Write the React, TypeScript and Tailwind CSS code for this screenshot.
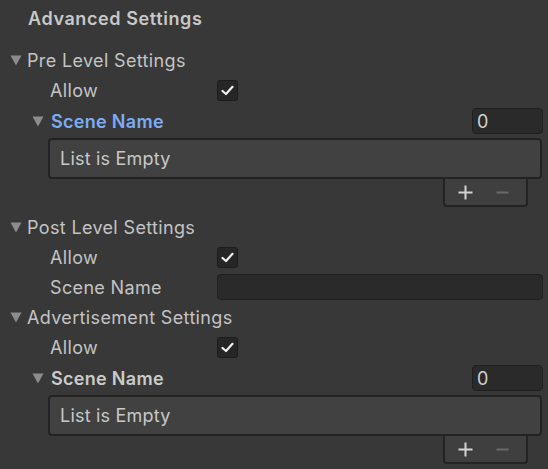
import React from "react"

const font = { fontFamily: "Inter, 'Noto Sans', sans-serif" }

function Arrow({ x }: { x: string }) {
  return (
    <svg className={`${x} shrink-0`} width="12" height="11" viewBox="0 0 12 11">
      <path d="M0.5 0.5 L11.5 0.5 L6 10.5 Z" fill="#8c8c8c" />
    </svg>
  )
}

function Checkbox() {
  return (
    <div className="w-[21px] h-[21px] rounded-[3px] bg-[#262626] border border-[#1c1c1c] flex items-center justify-center">
      <svg width="13" height="11" viewBox="0 0 13 11">
        <path d="M1.5 6 L5 9 L11.5 1.8" stroke="#f0f0f0" strokeWidth="2.2" fill="none" strokeLinecap="round" strokeLinejoin="round" />
      </svg>
    </div>
  )
}

function Foldout({ label }: { label: string }) {
  return (
    <div className="h-[30px] flex items-center">
      <Arrow x="ml-[10px]" />
      <span className="ml-[5px] text-[18px] tracking-[0.35px] text-[#c4c4c4]">{label}</span>
    </div>
  )
}

function CheckRow({ label }: { label: string }) {
  return (
    <div className="h-[30px] flex items-center">
      <span className="pl-[50px] w-[217px] text-[18px] tracking-[0.35px] text-[#c4c4c4]">{label}</span>
      <Checkbox />
    </div>
  )
}

function ListBlock({ blue }: { blue?: boolean }) {
  return (
    <div>
      <div className="mt-[1px] h-[30px] flex items-center">
        <Arrow x="ml-[32px]" />
        <span className={`ml-[7px] text-[18px] tracking-[0.3px] font-semibold ${blue ? "text-[#7cacf5]" : "text-[#cbcbcb]"}`}>Scene Name</span>
        <div className="ml-auto mr-[5px] w-[71px] h-[26px] rounded-[4px] bg-[#2a2a2a] border border-[#1f1f1f] flex items-center pl-[4px] text-[18px] text-[#d2d2d2]">
          0
        </div>
      </div>
      <div className="ml-[48px] mr-[6px] mt-[2px] h-[41px] rounded-[4px] bg-[#414141] border-2 border-[#232323] flex items-center pl-[10px] text-[18px] tracking-[0.2px] text-[#c8c8c8]">
        List is Empty
      </div>
      <div className="flex justify-end pr-[20px]">
        <div className="w-[85px] h-[28px] bg-[#3f3f3f] border-2 border-t-0 border-[#232323] rounded-b-[4px] flex items-center pl-[13px] gap-[23px]">
          <svg width="15" height="15" viewBox="0 0 15 15">
            <path d="M7.5 0.5 V14.5 M0.5 7.5 H14.5" stroke="#d4d4d4" strokeWidth="2" />
          </svg>
          <svg width="13" height="15" viewBox="0 0 13 15">
            <path d="M0.5 7.5 H12.5" stroke="#6a6a6a" strokeWidth="2" />
          </svg>
        </div>
      </div>
    </div>
  )
}

export default function App() {
  return (
    <div className="w-[548px] h-[469px] bg-[#383838] overflow-hidden" style={font}>
      <div className="h-[36px] flex items-center pl-[28px] text-[18px] font-semibold text-[#c8c8c8] tracking-[0.6px]">
        Advanced Settings
      </div>
      <div className="mt-[9px]">
        <Foldout label="Pre Level Settings" />
        <CheckRow label="Allow" />
        <ListBlock blue />
      </div>
      <div className="mt-[5px]">
        <Foldout label="Post Level Settings" />
        <CheckRow label="Allow" />
        <div className="h-[30px] flex items-center">
          <span className="pl-[50px] w-[217px] text-[18px] tracking-[0.35px] text-[#c4c4c4]">Scene Name</span>
          <div className="flex-1 mr-[5px] h-[26px] rounded-[4px] bg-[#2a2a2a] border border-[#1f1f1f]" />
        </div>
        <Foldout label="Advertisement Settings" />
        <CheckRow label="Allow" />
        <ListBlock />
      </div>
    </div>
  )
}
